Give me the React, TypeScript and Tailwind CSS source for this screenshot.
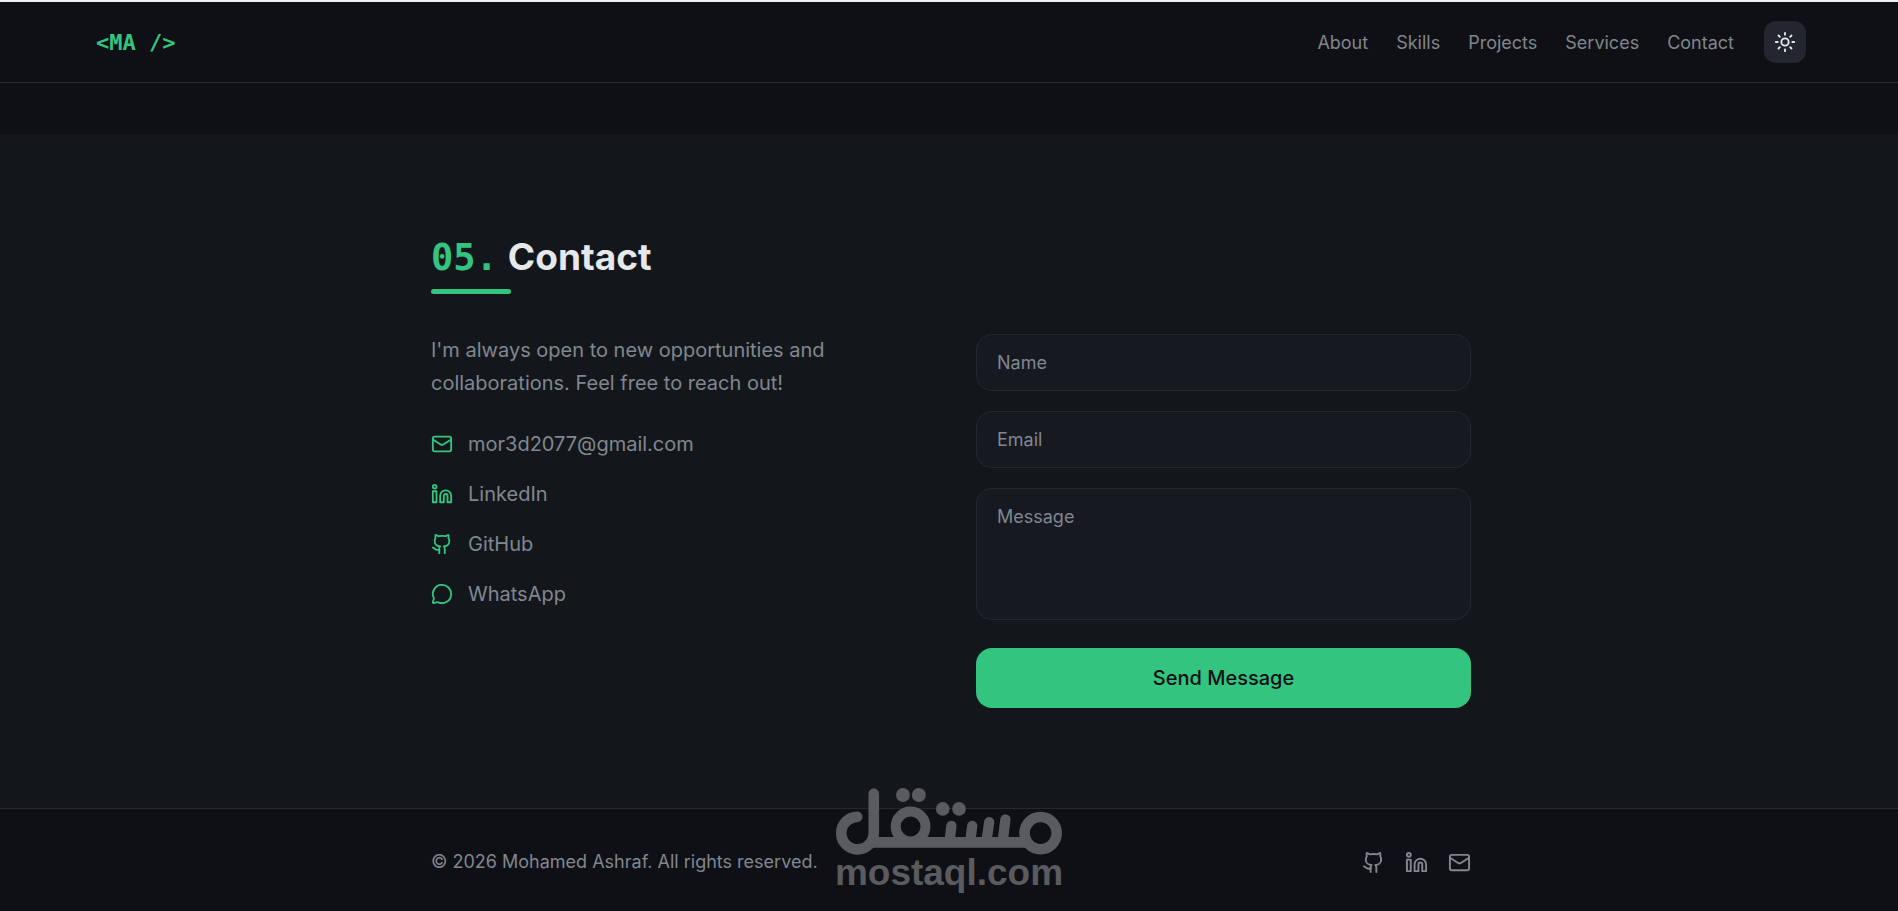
import { Github, Linkedin, Mail, MessageCircle, Sun } from "lucide-react";

const navLinks = ["About", "Skills", "Projects", "Services", "Contact"];

const contactLinks = [
  { label: "mor3d2077@gmail.com", href: "mailto:mor3d2077@gmail.com", Icon: Mail },
  { label: "LinkedIn", href: "#linkedin", Icon: Linkedin },
  { label: "GitHub", href: "#github", Icon: Github },
  { label: "WhatsApp", href: "#whatsapp", Icon: MessageCircle },
];

const socialLinks = [
  { label: "GitHub", href: "#github", Icon: Github },
  { label: "LinkedIn", href: "#linkedin", Icon: Linkedin },
  { label: "Email", href: "mailto:mor3d2077@gmail.com", Icon: Mail },
];

const fieldClass =
  "block w-full rounded-2xl border border-[#24272f] bg-[#161920] px-5 text-lg text-[#e6e9eb] placeholder:text-[#808790] outline-none focus:border-[#33c580]";

function Header() {
  return (
    <header className="border-t-2 border-b border-t-[#eef1f3] border-b-[#292b2f] bg-[#0f1015]">
      <div className="flex h-20 items-center justify-between pr-[92px] pl-24">
        <a href="#home" className="font-['DejaVu_Sans_Mono',monospace] text-[22px] font-bold text-[#33c580]">
          {"<MA />"}
        </a>
        <div className="flex items-center gap-[30px]">
          <nav className="flex gap-7 pt-0.5">
            {navLinks.map((link) => (
              <a key={link} href={`#${link.toLowerCase()}`} className="text-lg text-[#80868c]">
                {link}
              </a>
            ))}
          </nav>
          <button
            type="button"
            aria-label="Toggle theme"
            className="flex size-[42px] items-center justify-center rounded-xl bg-[#23262f] text-[#e6e9eb]"
          >
            <Sun className="size-[22px]" />
          </button>
        </div>
      </div>
    </header>
  );
}

function ContactForm() {
  return (
    <form className="flex flex-col gap-5">
      <input aria-label="Name" placeholder="Name" className={`${fieldClass} h-[57px]`} />
      <input aria-label="Email" type="email" placeholder="Email" className={`${fieldClass} h-[57px]`} />
      <textarea
        aria-label="Message"
        placeholder="Message"
        className={`${fieldClass} mb-2 h-[132px] resize-none py-[14px]`}
      />
      <button type="button" className="h-[60px] rounded-2xl bg-[#33c580] text-xl font-medium text-[#0f1015]">
        Send Message
      </button>
    </form>
  );
}

function Watermark() {
  return (
    <div className="pointer-events-none absolute bottom-5 left-1/2 flex -translate-x-1/2 flex-col items-center text-[#5a5b5f]">
      <svg viewBox="75 54 685 202" className="h-[67px] w-[228px]" fill="none" stroke="currentColor" strokeLinecap="round" aria-hidden="true">
        <path d="M141 141A49 49 0 1 0 191 190V71" strokeWidth="32" />
        <path d="M180 218H665" strokeWidth="32" strokeLinecap="butt" />
        <circle cx="302" cy="170" r="45" strokeWidth="30" />
        <path d="M425 168L420 212M488 168L482 212M539 157L531 212M588 149L580 212" strokeWidth="31" />
        <circle cx="694" cy="190" r="48.5" strokeWidth="32" />
        <g fill="currentColor" stroke="none">
          <circle cx="279" cy="75" r="21" />
          <circle cx="327" cy="75" r="21" />
          <circle cx="399" cy="117" r="20.5" />
          <circle cx="448" cy="117" r="20.5" />
        </g>
      </svg>
      <span className="font-['Liberation_Sans',sans-serif] text-[37px] leading-9 font-bold">mostaql.com</span>
    </div>
  );
}

export default function App() {
  return (
    <div className="relative flex min-h-screen flex-col bg-[#0f1015] font-['Inter',sans-serif]">
      <Header />
      <main className="mt-[51px] bg-[#13171b] pt-[100px] pb-[100px] pl-1">
        <section id="contact" className="mx-auto max-w-[1040px]">
          <h2 className="flex items-baseline gap-[10px] text-[37px] leading-[45px] font-bold text-[#e6e9eb]">
            <span className="font-['DejaVu_Sans_Mono',monospace] leading-none text-[#33c580]">05.</span>
            Contact
          </h2>
          <div className="mt-[10px] h-[5px] w-20 rounded-full bg-[#33c580]" />
          <div className="mt-10 grid grid-cols-2 gap-[50px]">
            <div>
              <p className="text-xl leading-[33px] text-[#808790]">
                I'm always open to new opportunities and
                <br />
                collaborations. Feel free to reach out!
              </p>
              <ul className="mt-[29px] flex flex-col gap-5">
                {contactLinks.map(({ label, href, Icon }) => (
                  <li key={label}>
                    <a href={href} className="flex items-center gap-[15px] text-xl leading-[30px] text-[#808790]">
                      <Icon className="size-[22px] text-[#33c580]" />
                      {label}
                    </a>
                  </li>
                ))}
              </ul>
            </div>
            <ContactForm />
          </div>
        </section>
      </main>
      <footer className="flex-1 border-t border-[#25292d] pl-1">
        <div className="mx-auto flex h-[102px] max-w-[1040px] items-center justify-between pt-1 text-[#808790]">
          <p className="text-lg">© 2026 Mohamed Ashraf. All rights reserved.</p>
          <div className="flex gap-5">
            {socialLinks.map(({ label, href, Icon }) => (
              <a key={label} href={href} aria-label={label}>
                <Icon className="size-[23px]" />
              </a>
            ))}
          </div>
        </div>
      </footer>
      <Watermark />
    </div>
  );
}
